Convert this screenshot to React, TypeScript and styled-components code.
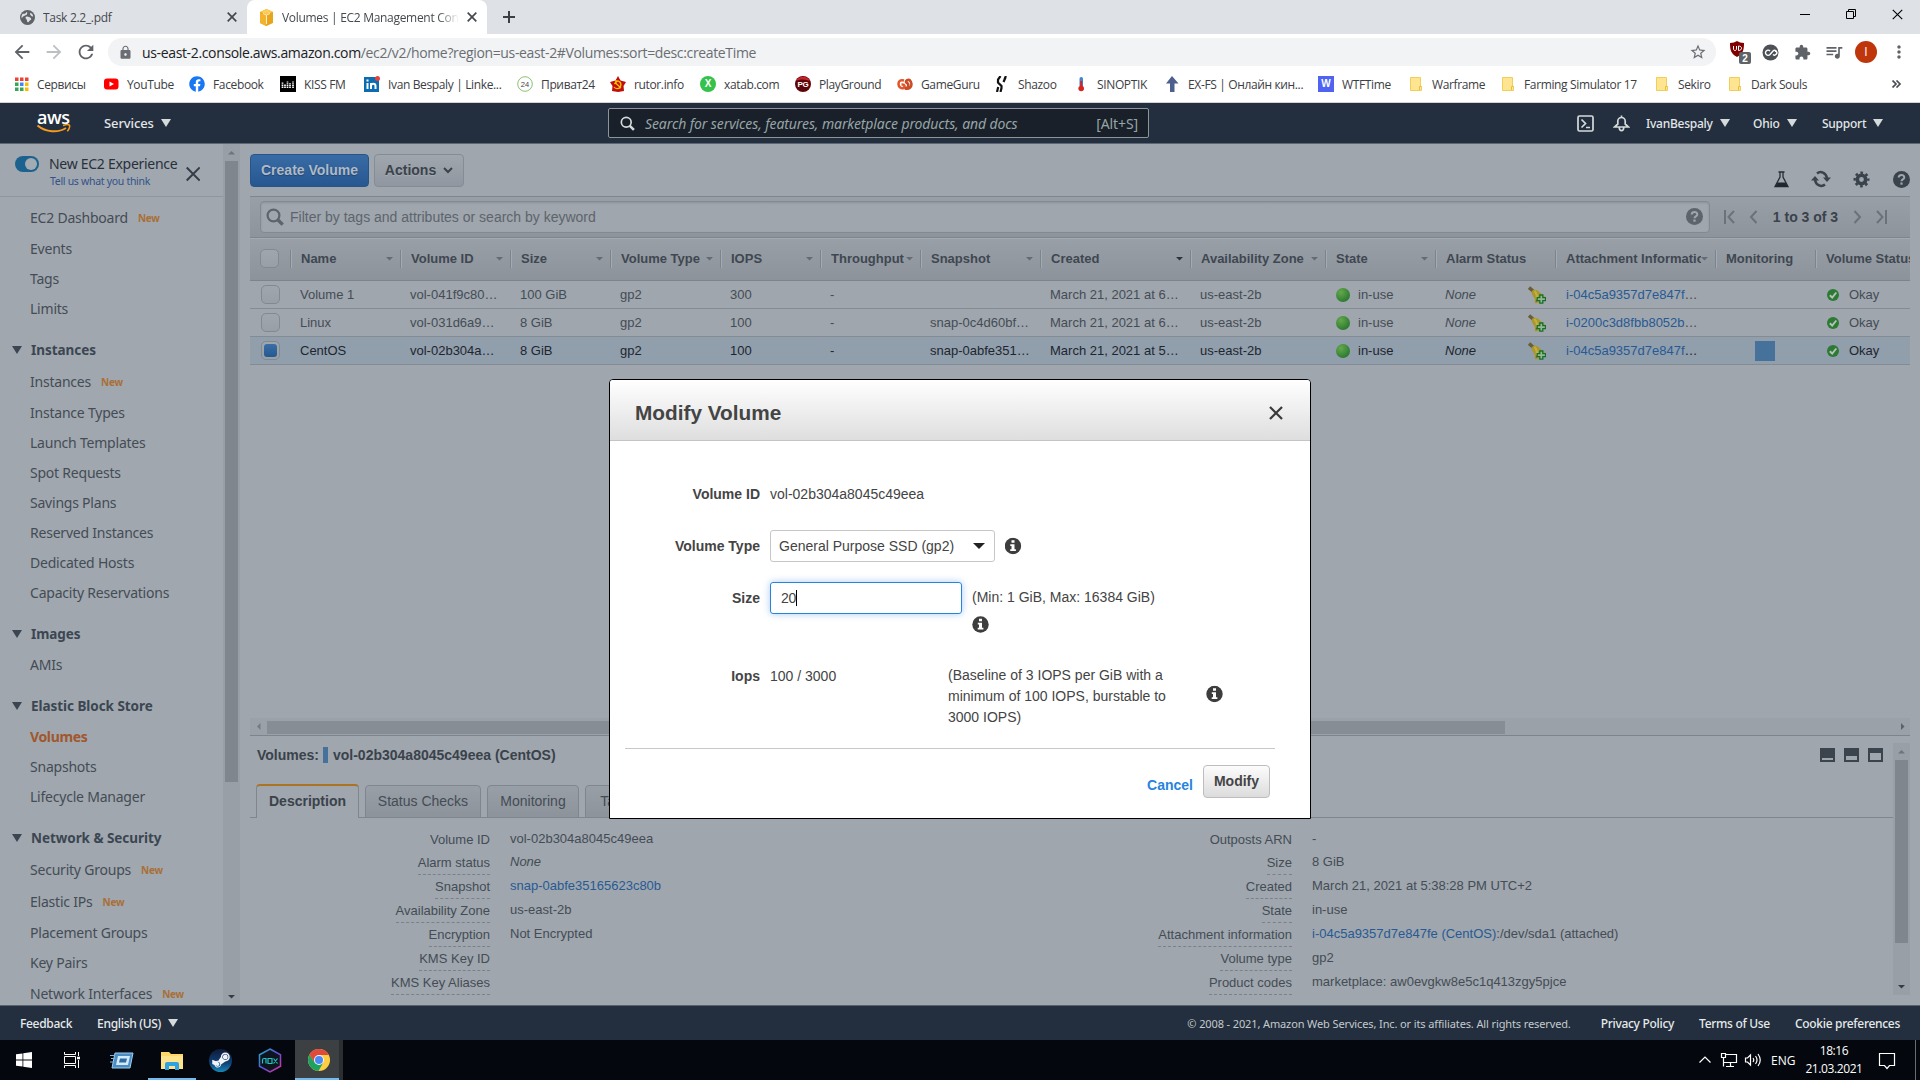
import React from 'react';
import styled, { createGlobalStyle, css } from 'styled-components';
import {
  MdArrowBack,
  MdArrowForward,
  MdRefresh,
  MdLock,
  MdStarBorder,
  MdExtension,
  MdQueueMusic,
  MdMoreVert,
} from 'react-icons/md';
import { FaFacebook, FaSteamSymbol } from 'react-icons/fa';

const arial = `"Liberation Sans", Arial, sans-serif`;
const ui = `"Open Sans", "Noto Sans", sans-serif`;
const ember = `"Noto Sans", "Open Sans", sans-serif`;

const c = {
  page: '#9fa6ad',
  line: '#858c94',
  text: '#444c55',
  strong: '#3a424b',
  link: '#275a94',
  navy: '#232f3e',
};

const GlobalStyle = createGlobalStyle`
  * { box-sizing: border-box; }
  html, body { margin: 0; padding: 0; overflow: hidden; }
  body { width: 1920px; height: 1080px; font-family: ${arial}; }
  svg { display: block; flex: none; }
`;

const Screen = styled.div`
  width: 1920px;
  height: 1080px;
  display: flex;
  flex-direction: column;
  overflow: hidden;
  position: relative;
  background: ${c.page};
`;

const Spacer = styled.div`
  flex: 1;
`;

/* ---------- browser chrome ---------- */

const TabStrip = styled.div`
  height: 34px;
  flex: none;
  display: flex;
  background: #dee1e6;
  font: 12px ${ui};
  color: #45494d;
`;

const BrowserTab = styled.div<{ $active?: boolean; $w: number }>`
  width: ${(p) => p.$w}px;
  height: 34px;
  display: flex;
  align-items: center;
  padding: 0 10px 0 ${(p) => (p.$active ? 12 : 20)}px;
  ${(p) =>
    p.$active &&
    css`
      background: #fff;
      border-radius: 8px 8px 0 0;
    `}
`;

const TabTitle = styled.div<{ $fade?: boolean }>`
  flex: 1;
  margin: 0 8px 0 8px;
  overflow: hidden;
  white-space: nowrap;
  letter-spacing: -0.3px;
  ${(p) =>
    p.$fade &&
    css`
      mask-image: linear-gradient(90deg, #000 88%, transparent);
    `}
`;

const WindowButtons = styled.div`
  display: flex;
  gap: 36px;
  padding: 9px 17px 0 0;
`;

const Toolbar = styled.div`
  height: 42px;
  flex: none;
  display: flex;
  align-items: center;
  padding: 0 0 10px 11px;
  background: #fff;
  color: #5f6368;
`;

const NavIcons = styled.div`
  display: flex;
  flex: none;
  gap: 10px;
  padding-top: 3px;
  width: 97px;
`;

const Omnibox = styled.div`
  width: 1608px;
  flex: none;
  height: 28px;
  margin-top: 4px;
  border-radius: 14px;
  background: #f1f3f4;
  display: flex;
  align-items: center;
  padding: 0 9px 0 10px;
  font: 14px ${ui};
  letter-spacing: -0.35px;
  color: #6a6e73;
`;

const Url = styled.div`
  flex: 1;
  margin-left: 9px;
  white-space: nowrap;
  b {
    font-weight: 400;
    color: #202124;
  }
`;

const Extensions = styled.div`
  display: flex;
  flex: none;
  align-items: center;
  margin: 4px 0 0 9px;
`;

const ExtSlot = styled.div<{ $w: number }>`
  width: ${(p) => p.$w}px;
  display: flex;
  justify-content: center;
`;

const Avatar = styled.div`
  width: 22px;
  height: 22px;
  border-radius: 50%;
  background: #bf360c;
  color: #fff;
  font: 12px/22px ${ui};
  text-align: center;
`;

const Bookmarks = styled.div`
  height: 27px;
  flex: none;
  display: flex;
  align-items: center;
  padding: 0 0 10px 13px;
  background: #fff;
  border-bottom: 1px solid #cfd2d6;
  font: 12px ${ui};
  letter-spacing: -0.36px;
  color: #3c4043;
`;

const Bookmark = styled.div<{ $w: number }>`
  width: ${(p) => p.$w}px;
  flex: none;
  display: flex;
  align-items: center;
  gap: 8px;
  white-space: nowrap;
`;

const Tile = styled.div<{ $bg: string; $round?: boolean }>`
  width: 16px;
  height: 16px;
  flex: none;
  border-radius: ${(p) => (p.$round ? 8 : 0)}px;
  background: ${(p) => p.$bg};
  color: #fff;
  font: bold 10px/16px ${arial};
  text-align: center;
  letter-spacing: 0;
`;

/* ---------- AWS header ---------- */

const AwsBar = styled.div`
  height: 41px;
  flex: none;
  display: flex;
  align-items: center;
  background: ${c.navy};
  border-bottom: 1px solid #5d6771;
  color: #e2e6e8;
  font: 500 13px ${ember};
  letter-spacing: -0.1px;
`;

const AwsLogo = styled.div`
  width: 104px;
  padding: 0 0 3px 36px;
`;

const LogoWord = styled.div`
  font: 600 18px/16px ${ui};
  letter-spacing: -0.4px;
  color: #fff;
  height: 15px;
  margin-left: 1px;
`;

const Caret = styled.span<{ $s?: number; $h?: number; $color?: string }>`
  display: inline-block;
  flex: none;
  width: 0;
  height: 0;
  border: ${(p) => p.$s ?? 5}px solid transparent;
  border-top: ${(p) => p.$h ?? 8}px solid ${(p) => p.$color ?? '#d5dbdb'};
  border-bottom: 0;
`;

const MenuLabel = styled.div<{ $w?: number; $small?: boolean }>`
  display: flex;
  align-items: center;
  gap: 7px;
  white-space: nowrap;
  flex: none;
  width: ${(p) => (p.$w ? p.$w + 'px' : 'auto')};
  ${(p) =>
    p.$small &&
    css`
      font-size: 12px;
      letter-spacing: -0.25px;
    `}
`;

const AwsSearch = styled.div`
  width: 541px;
  flex: none;
  height: 30px;
  display: flex;
  align-items: center;
  padding: 0 10px 0 11px;
  background: #1a2029;
  border: 1px solid #8a9699;
  border-radius: 2px;
  color: #95a5a6;
  font: 14px ${ember};
  letter-spacing: -0.1px;
  i {
    flex: 1;
    margin-left: 10px;
  }
`;

/* ---------- console body ---------- */

const Body = styled.div`
  height: 861px;
  flex: none;
  display: flex;
  background: ${c.page};
`;

const Sidebar = styled.div`
  width: 223px;
  flex: none;
  overflow: hidden;
  background: #a0a7ae;
  font: 14px ${ember};
  color: ${c.text};
`;

const SideHead = styled.div`
  height: 53px;
  border-bottom: 1px solid #8f969e;
  display: flex;
  padding: 12px 0 0 15px;
  margin-bottom: 4px;
`;

const Toggle = styled.div`
  width: 24px;
  height: 16px;
  border-radius: 8px;
  background: #1b628f;
  padding: 2px 2px 0 10px;
  &::after {
    content: '';
    display: block;
    width: 12px;
    height: 12px;
    border-radius: 50%;
    background: #a3abb2;
  }
`;

const SideTitle = styled.div`
  width: 137px;
  margin: -3px 0 0 10px;
  line-height: 21px;
  color: #28313b;
  white-space: nowrap;
  letter-spacing: -0.28px;
  small {
    display: block;
    margin-left: 1px;
    font-size: 10.5px;
    line-height: 14px;
    color: #33528a;
    letter-spacing: -0.3px;
  }
`;

const SideItem = styled.div<{ $new?: boolean; $active?: boolean }>`
  height: ${(p) => (p.$new ? 32 : 30)}px;
  padding-left: 30px;
  display: flex;
  align-items: center;
  white-space: nowrap;
  letter-spacing: -0.22px;
  ${(p) =>
    p.$active &&
    css`
      color: #a0572d;
      font-weight: 700;
      letter-spacing: -0.35px;
    `}
`;

const NewMark = styled.span`
  margin: 2px 0 0 10px;
  font-size: 10px;
  font-weight: 700;
  color: #a96f37;
`;

const SideGroup = styled.div`
  height: 42px;
  padding: 12px 0 0 12px;
  display: flex;
  align-items: center;
  gap: 9px;
  font-weight: 700;
  font-size: 13.5px;
  color: #3b4652;
  white-space: nowrap;
  letter-spacing: -0.05px;
`;

const VScroll = styled.div`
  width: 17px;
  flex: none;
  background: #989fa7;
  display: flex;
  flex-direction: column;
  align-items: center;
  padding: 6px 0;
`;

const VThumb = styled.div<{ $h: number }>`
  width: 13px;
  height: ${(p) => p.$h}px;
  margin-top: 6px;
  background: #7f868e;
`;

const Main = styled.div`
  flex: 1;
  min-width: 0;
  padding: 0 10px;
  display: flex;
  flex-direction: column;
  color: ${c.text};
  font-size: 13px;
`;

const ActionsBar = styled.div`
  height: 52px;
  display: flex;
  align-items: flex-start;
  padding-top: 10px;
  gap: 5px;
`;

const Button = styled.div<{ $primary?: boolean; $w: number }>`
  width: ${(p) => p.$w}px;
  height: 33px;
  display: flex;
  align-items: center;
  justify-content: center;
  gap: 7px;
  padding-bottom: 1px;
  border-radius: 4px;
  font-size: 14px;
  font-weight: 700;
  white-space: nowrap;
  border: 1px solid ${(p) => (p.$primary ? '#285587' : '#858c94')};
  background: ${(p) =>
    p.$primary
      ? 'linear-gradient(#386ba5, #285790)'
      : 'linear-gradient(#9fa6ad, #9097a0)'};
  color: ${(p) => (p.$primary ? '#b0bac4' : c.strong)};
  text-shadow: ${(p) => (p.$primary ? '0 1px 1px #1f4575' : '0 1px 0 #a5acb3')};
`;

const ActionIcons = styled.div`
  margin: 0 -11px 0 auto;
  display: grid;
  grid-template-columns: repeat(4, 40px);
  justify-items: center;
  align-items: center;
  padding-top: 16px;
  color: ${c.strong};
`;

const FilterBar = styled.div`
  height: 42px;
  border-top: 1px solid #7f868e;
  border-bottom: 1px solid #7f868e;
  background: linear-gradient(#989fa7, #8d949c);
  display: flex;
  align-items: center;
  padding: 0 23px 1px 10px;
`;

const FilterInput = styled.div`
  width: 1450px;
  height: 32px;
  border: 1px solid #838a92;
  border-radius: 4px;
  background: #9fa6ad;
  box-shadow: inset 0 1px 2px #8b9299;
  display: flex;
  align-items: center;
  padding: 0 6px 0 5px;
  color: #5d646c;
  font-size: 14px;
  span {
    flex: 1;
    margin-left: 6px;
  }
`;

const Pager = styled.div`
  flex: 1;
  margin-left: 14px;
  display: flex;
  align-items: center;
  justify-content: space-between;
  font-size: 14px;
  color: ${c.strong};
`;

const columns =
  '40px 110px 110px 100px 110px 100px 100px 120px 150px 135px 110px 120px 160px 100px 95px';

const HeadRow = styled.div`
  height: 43px;
  display: grid;
  grid-template-columns: ${columns};
  align-items: center;
  padding-bottom: 2px;
  background: linear-gradient(#989fa7, #8c939b);
  border-top: 1px solid #a3aab1;
  border-bottom: 1px solid #7d848c;
`;

const HeadCell = styled.div<{ $sortable: boolean }>`
  height: 18px;
  border-left: 1px solid #7d848c;
  box-shadow: inset 1px 0 0 #a3aab1;
  padding: 0 ${(p) => (p.$sortable ? 7 : 0)}px 0 10px;
  display: flex;
  align-items: center;
  font-weight: 700;
  color: #3f4750;
  white-space: nowrap;
  overflow: hidden;
  span {
    flex: 1;
    overflow: hidden;
  }
`;

const Row = styled.div<{ $selected?: boolean }>`
  height: 28px;
  display: grid;
  grid-template-columns: ${columns};
  align-items: center;
  border-bottom: 1px solid #848b93;
  ${(p) =>
    p.$selected &&
    css`
      background: #919eac;
      color: #1d262f;
    `}
`;

const Cell = styled.div<{ $pad?: number }>`
  padding-left: ${(p) => p.$pad ?? 10}px;
  display: flex;
  align-items: center;
  white-space: nowrap;
  a {
    color: ${c.link};
  }
`;

const Check = styled.div<{ $on?: boolean; $head?: boolean }>`
  width: 19px;
  height: 19px;
  margin-left: ${(p) => (p.$head ? 10 : 11)}px;
  border: 1px solid #828990;
  border-radius: 5px;
  background: linear-gradient(#9fa6ad, #989fa7);
  padding: 2px;
  &::after {
    content: '';
    display: ${(p) => (p.$on ? 'block' : 'none')};
    height: 13px;
    border-radius: 3px;
    background: linear-gradient(#3a6ea8, #26578f);
  }
`;

const StateDot = styled.div`
  width: 14px;
  height: 14px;
  margin-right: 8px;
  border-radius: 50%;
  background: radial-gradient(circle at 35% 30%, #65a84b, #338035 65%, #246b2d);
`;

const BlueSquare = styled.div`
  width: 20px;
  height: 20px;
  margin-left: 30px;
  background: #46719a;
`;

const EmptyArea = styled.div`
  height: 353px;
`;

const HScroll = styled.div`
  height: 18px;
  border-bottom: 1px solid #7d848c;
  background: #9aa1a8;
  display: flex;
  align-items: center;
  padding: 0 5px 0 6px;
  justify-content: space-between;
`;

const HThumb = styled.div`
  width: 1238px;
  height: 13px;
  margin: 1px auto 0 6px;
  background: #868d95;
`;

const Detail = styled.div`
  flex: 1;
  display: flex;
  padding: 7px 0 10px;
  min-height: 0;
`;

const DetailMain = styled.div`
  flex: 1;
  min-width: 0;
`;

const DetailTitle = styled.div`
  height: 41px;
  display: flex;
  align-items: flex-start;
  padding: 4px 10px 0 7px;
  font-size: 14px;
  font-weight: 700;
  color: ${c.strong};
  i {
    width: 5px;
    height: 16px;
    margin: 0 5px 0 4px;
    background: #46719a;
  }
`;

const PaneIcons = styled.div`
  margin-left: auto;
  display: flex;
  gap: 9px;
  padding-top: 1px;
`;

const PaneIcon = styled.div<{ $top: number }>`
  width: 15px;
  height: 14px;
  border: 2px solid #3b434c;
  border-top-width: ${(p) => p.$top}px;
`;

const Tabs = styled.div`
  height: 34px;
  display: flex;
  align-items: flex-end;
  gap: 6px;
  padding-left: 6px;
  box-shadow: inset 0 -1px 0 #7f868e;
`;

const DetailTab = styled.div<{ $active?: boolean; $w: number }>`
  width: ${(p) => p.$w}px;
  height: ${(p) => (p.$active ? 34 : 33)}px;
  border: 1px solid #7f868e;
  border-radius: 4px 4px 0 0;
  background: linear-gradient(#999fa7, #8c939b);
  font-size: 14px;
  line-height: 31px;
  text-align: center;
  ${(p) =>
    p.$active &&
    css`
      background: ${c.page};
      border-top: 2px solid #ab7423;
      border-bottom: 0;
      font-weight: 700;
      color: ${c.strong};
    `}
`;

const DetailColumns = styled.div`
  display: grid;
  grid-template-columns: 802px 1fr;
  padding-top: 11px;
`;

const Props = styled.dl`
  margin: 0;
  display: grid;
  grid-template-columns: 240px 1fr;
  grid-template-rows: 23px;
  grid-auto-rows: 24px;
  column-gap: 20px;
  white-space: nowrap;
`;

const Term = styled.dt<{ $plain?: boolean }>`
  justify-self: end;
  height: 23px;
  line-height: 22px;
  border-bottom: ${(p) => (p.$plain ? '0' : '1px dashed #7a8189')};
`;

const Value = styled.dd`
  margin: 0;
  line-height: 20px;
  a {
    color: ${c.link};
  }
`;

const Footer = styled.div`
  height: 35px;
  flex: none;
  display: flex;
  align-items: center;
  padding: 0 20px 0;
  border-top: 1px solid #59636e;
  background: ${c.navy};
  font: 500 12px ${ember};
  letter-spacing: -0.3px;
  color: #e6eaeb;
  white-space: nowrap;
`;

const Copyright = styled.span`
  font-size: 11px;
  font-weight: 400;
  color: #c3cacd;
  letter-spacing: -0.12px;
  margin-right: 30px;
`;

const FooterLink = styled.span<{ $gap: number }>`
  margin-right: ${(p) => p.$gap}px;
`;

/* ---------- modal ---------- */

const Modal = styled.div`
  position: absolute;
  left: 609px;
  top: 379px;
  width: 702px;
  height: 440px;
  border: 1px solid #000;
  border-radius: 4px 4px 0 0;
  background: #fff;
  color: #444;
  font-size: 14px;
  overflow: hidden;
`;

const ModalHead = styled.div`
  height: 61px;
  border-bottom: 1px solid #c4c4c4;
  background: linear-gradient(#fff, #dedede);
  display: flex;
  align-items: center;
  justify-content: space-between;
  padding: 6px 27px 0 25px;
  font-size: 20.8px;
  font-weight: 700;
`;

const Field = styled.div<{ $h: number; $pt: number }>`
  height: ${(p) => p.$h}px;
  padding-top: ${(p) => p.$pt}px;
  display: flex;
  line-height: 21px;
`;

const FieldLabel = styled.div<{ $drop?: number }>`
  width: 150px;
  margin: ${(p) => p.$drop ?? 0}px 10px 0 0;
  text-align: right;
  font-weight: 700;
`;

const Select = styled.div`
  width: 225px;
  height: 32px;
  margin-right: 10px;
  border: 1px solid #c6c6c6;
  border-radius: 3px;
  display: flex;
  align-items: center;
  justify-content: space-between;
  padding: 0 9px 0 8px;
`;

const SizeInput = styled.div`
  width: 192px;
  height: 32px;
  margin-right: 10px;
  border: 1px solid #2784dd;
  border-radius: 3px;
  box-shadow: 0 0 7px rgba(60, 140, 225, 0.45);
  display: flex;
  align-items: center;
  padding-left: 10px;
  letter-spacing: -0.3px;
  &::after {
    content: '';
    width: 1px;
    height: 16px;
    background: #000;
  }
`;

const SizeHint = styled.div`
  padding-top: 5px;
  svg {
    margin-top: 8px;
  }
`;

const Iops = styled.div`
  width: 178px;
  padding-top: 1px;
`;

const IopsHint = styled.div`
  width: 258px;
`;

const ModalFoot = styled.div`
  margin: 0 35px 0 15px;
  border-top: 1px solid #c8c8c8;
  display: flex;
  justify-content: flex-end;
  padding: 16px 5px 0 0;
  font-weight: 700;
`;

const Cancel = styled.div`
  margin: 12px 10px 0 0;
  color: #2784dd;
`;

const ModifyButton = styled.div`
  width: 67px;
  height: 33px;
  border: 1px solid #bdbdbd;
  border-radius: 4px;
  background: linear-gradient(#fcfcfc, #dcdcdc);
  text-align: center;
  line-height: 30px;
`;

/* ---------- taskbar ---------- */

const Taskbar = styled.div`
  height: 40px;
  flex: none;
  display: flex;
  align-items: center;
  background: #04080e;
  color: #fff;
  font: 12px ${ui};
`;

const TaskSlot = styled.div<{ $w: number; $open?: boolean; $active?: boolean }>`
  width: ${(p) => p.$w}px;
  height: 40px;
  display: flex;
  align-items: center;
  justify-content: center;
  background: ${(p) => (p.$active ? '#3c4043' : 'transparent')};
  border-right: ${(p) => (p.$active ? '4px solid #2b2f32' : '0')};
  padding-left: ${(p) => (p.$active ? 4 : 0)}px;
  box-shadow: ${(p) => (p.$open || p.$active ? 'inset 0 -2px 0 #76b9ed' : 'none')};
`;

const SteamDisc = styled.div`
  width: 23px;
  height: 23px;
  border-radius: 50%;
  display: flex;
  align-items: center;
  justify-content: center;
  background: linear-gradient(#101a3a, #0f3f73 60%, #1587b8);
`;

const Tray = styled.div`
  margin-left: auto;
  display: flex;
  align-items: center;
`;

const Clock = styled.div`
  width: 80px;
  text-align: center;
  line-height: 18px;
  letter-spacing: -0.4px;
`;

/* ---------- drawings ---------- */

const Cross = ({ s, w, color }: { s: number; w: number; color: string }) => (
  <svg width={s} height={s} viewBox="0 0 10 10" stroke={color} strokeWidth={(w * 10) / s}>
    <path d="M.7.7 9.3 9.3M9.3.7.7 9.3" />
  </svg>
);

const Globe = () => (
  <svg width="15" height="15" viewBox="0 0 16 16">
    <circle cx="8" cy="8" r="8" fill="#5f6368" />
    <path d="M3 4c2 .5 3-.5 4-2 1 0 1 2 0 3S3 6 2 9C1 7 2 5 3 4zM7 7c2 0 5 1 5 3-1 1-2 1-3 3-2 0-1-2-2-3S5 8 7 7zM11 3c2 1 3 2 3 4-2 0-4-2-3-4z" fill="#dee1e6" />
  </svg>
);

const Cube = () => (
  <svg width="15" height="17" viewBox="0 0 15 17">
    <path d="M1 3 7.500 0 14 3v11l-6.500 3L1 14z" fill="#e8a41c" />
    <path d="M1 3 7.500 0 14 3 7.500 5z" fill="#fdcd55" />
    <path d="M1 4l6 2v11l-6-3z" fill="#f4b32f" />
    <path d="M4 4.500l3.500 1.500L11 4.500M7.500 6v9" stroke="#fff0c4" fill="none" />
  </svg>
);

const AppsGrid = () => (
  <svg width="16" height="16" viewBox="0 0 16 16">
    {['#ea4335', '#ea4335', '#ea4335', '#34a853', '#4285f4', '#fbbc04', '#34a853', '#34a853', '#fbbc04'].map((f, i) => (
      <rect key={i} x={2 + (i % 3) * 5} y={1.500 + Math.floor(i / 3) * 5} width="3.500" height="3.500" fill={f} />
    ))}
  </svg>
);

const YouTube = () => (
  <svg width="16" height="16" viewBox="0 0 16 16">
    <rect x="1" y="2.500" width="14.500" height="11" rx="3" fill="#f00" />
    <path d="M6.500 5.500v5l4.500-2.500z" fill="#fff" />
  </svg>
);

const KissBars = () => (
  <svg width="16" height="16" viewBox="0 0 16 16">
    <rect width="16" height="16" fill="#000" />
    <path d="M2.500 12V6M5 12V8M7.500 12V5M10 12V7M13 12V5" stroke="#fff" strokeWidth="1.700" strokeDasharray="1.200 .6" />
  </svg>
);

const LinkedIn = () => (
  <svg width="16" height="16" viewBox="0 0 16 16">
    <rect y="1" width="15" height="15" fill="#0b6cb0" />
    <path d="M3.500 7v6M7 13V7M7 10c0-3 4.500-3 4.500 0v3" stroke="#fff" strokeWidth="2" fill="none" />
    <rect x="2.500" y="3.500" width="2" height="2" fill="#fff" />
    <circle cx="13.500" cy="2.500" r="2.500" fill="#e8413c" />
  </svg>
);

const Privat = () => (
  <svg width="16" height="16" viewBox="0 0 16 16">
    <circle cx="8" cy="8" r="7.300" fill="#fff" stroke="#8cc06c" />
    <text x="8" y="10.800" fontSize="7.500" textAnchor="middle" fill="#444" fontFamily="Liberation Sans" letterSpacing="0">24</text>
  </svg>
);

const Rutor = () => (
  <svg width="16" height="16" viewBox="0 0 16 16">
    <path d="M8 0l2.500 4.500L16 6l-2.500 4 .5 5-6 1-6-1 .5-5L0 6l5.500-1.500z" fill="#c00d0d" />
    <path d="M5 5c4-1 7 2 5.500 5.500S5 12.500 4 11M5 6.500l6 5.500M4.500 8l2.500-3" stroke="#ffc400" strokeWidth="1.300" fill="none" />
  </svg>
);

const PlayGround = () => (
  <svg width="16" height="16" viewBox="0 0 16 16">
    <circle cx="8" cy="8" r="8" fill="#5c0509" />
    <path d="M1 5a8 8 0 0 1 14 0C10 3 5 3 1 5z" fill="#c3232a" />
    <text x="8" y="11" fontSize="8" textAnchor="middle" fill="#fff" fontFamily="Liberation Sans" fontWeight="bold">PG</text>
  </svg>
);

const GameGuru = () => (
  <svg width="16" height="16" viewBox="0 0 16 16" fill="none" strokeWidth="2.600">
    <path d="M7 4.500C3.500 3.500 1.500 5 1.500 8s3 5 5 4c2-1 1-3.500-1-3.500H4.500" stroke="#e2562a" />
    <path d="M12.500 4C9 3.500 8 6 10 7s2 5-2 5.500c4 1 6.500-1 6.500-4.500 0-2-1-3-2-4z" stroke="#c94c26" />
  </svg>
);

const Shazoo = () => (
  <svg width="16" height="16" viewBox="0 0 16 16" fill="none" stroke="#111" strokeWidth="2.200">
    <path d="M6.500 0 4 3.500v3L7.500 10v2l-1 4M12 0l-1.500 3M11.500 1.500 9.500 6M3 16l1.200-5" />
  </svg>
);

const Thermo = () => (
  <svg width="16" height="16" viewBox="0 0 16 16">
    <rect x="6.500" y="1" width="3.500" height="10" rx="1.700" fill="#3f86cf" />
    <path d="M8.200 5v7" stroke="#d3261f" strokeWidth="2" />
    <circle cx="8.200" cy="12.500" r="2.800" fill="#d3261f" />
  </svg>
);

const UpArrow = () => (
  <svg width="16" height="16" viewBox="0 0 16 16">
    <path d="M8 0 14.500 7.500h-4V16H6V7.500H2z" fill="#4d5f8d" />
  </svg>
);

const Folder = () => (
  <svg width="16" height="16" viewBox="0 0 16 16">
    <path d="M2.500 1.500h10v9h1v4h-11z" fill="#ffe591" stroke="#efcf58" />
    <path d="M11.500 14v-3.500h2" fill="none" stroke="#e8bf3b" />
  </svg>
);

const bookmarks: [string, React.ReactNode, number][] = [
  ['Сервисы', <AppsGrid />, 90],
  ['YouTube', <YouTube />, 86],
  ['Facebook', <FaFacebook size={16} color="#1877f2" />, 91],
  ['KISS FM', <KissBars />, 84],
  ['Ivan Bespaly | Linke...', <LinkedIn />, 153],
  ['Приват24', <Privat />, 93],
  ['rutor.info', <Rutor />, 90],
  ['xatab.com', <Tile $bg="#35c24a" $round>X</Tile>, 95],
  ['PlayGround', <PlayGround />, 102],
  ['GameGuru', <GameGuru />, 97],
  ['Shazoo', <Shazoo />, 79],
  ['SINOPTIK', <Thermo />, 91],
  ['EX-FS | Онлайн кин...', <UpArrow />, 154],
  ['WTFTime', <Tile $bg="#4f63f0">W</Tile>, 90],
  ['Warframe', <Folder />, 92],
  ['Farming Simulator 17', <Folder />, 154],
  ['Sekiro', <Folder />, 73],
  ['Dark Souls', <Folder />, 120],
];

const UBlock = () => (
  <svg width="22" height="24" viewBox="0 0 22 24">
    <path d="M1 3c3 0 5-1 7-2 2 1 4 2 7 2 0 7-1 11-7 14C2 14 1 10 1 3z" fill="#800000" />
    <path d="M4.500 6v3c0 2 3 2 3 0V6M9.500 6v4.500c4 0 4-4.500 0-4.500z" stroke="#fff" fill="none" />
    <rect x="10" y="12" width="12" height="12" rx="2" fill="#5f6368" />
    <text x="16" y="21.500" fontSize="10" textAnchor="middle" fill="#fff" fontFamily="Liberation Sans" fontWeight="bold">2</text>
  </svg>
);

const LinkExt = () => (
  <svg width="17" height="17" viewBox="0 0 17 17" fill="none" stroke="#fff" strokeWidth="1.400">
    <circle cx="8.500" cy="8.500" r="8" fill="#4d5156" stroke="none" />
    <path d="M8 7a2.600 2.600 0 1 0 0 3.500L11 7a2.300 2.300 0 1 1 0 3.500M13 7.200h2" />
  </svg>
);

const CloudShell = () => (
  <svg width="17" height="17" viewBox="0 0 17 17" fill="none" stroke="#d5dbdb" strokeWidth="1.700">
    <rect x="1" y="1" width="15" height="15" rx="1.500" />
    <path d="M4.500 4.500 8.500 8.500l-4 4M9 12.500h4" />
  </svg>
);

const Bell = () => (
  <svg width="17" height="17" viewBox="0 0 17 17" fill="none" stroke="#d5dbdb" strokeWidth="1.700">
    <path d="M8.500 .5v2M1.500 12h14L12.200 9V6c0-2-1.700-3.500-3.700-3.500S4.800 4 4.800 6v3zM6.200 12.500c.3 4.200 4.300 4.200 4.600 0" />
  </svg>
);

const Magnifier = ({ s, color, w }: { s: number; color: string; w: number }) => (
  <svg width={s} height={s} viewBox="0 0 18 18" fill="none" stroke={color}>
    <circle cx="7.500" cy="7.500" r="5.900" strokeWidth={w} />
    <path d="M11.500 11.500 16.700 16.700" strokeWidth={w * 1.500} />
  </svg>
);

const Flask = () => (
  <svg width="17" height="17" viewBox="0 0 17 17">
    <path d="M5.500 1h6M7 1v5L2 15.500h13L10 6V1" fill="none" stroke="#252d36" strokeWidth="1.300" />
    <path d="M4.500 11.500h8l2.500 4.500H2z" fill="#1f2830" />
  </svg>
);

const Sync = () => (
  <svg width="20" height="18" viewBox="0 0 20 18" fill="none" stroke="#3a424b" strokeWidth="2.500">
    <path d="M6 3.500c3.500-3 9-1 10 4.500M14 14.500c-3.500 3-9 1-10-4.500" />
    <path d="M12 7.500h8l-4 4.500zM0 10.500h8L4 6z" fill="#3a424b" stroke="none" />
  </svg>
);

const Gear = () => (
  <svg width="17" height="17" viewBox="0 0 17 17">
    <circle cx="8.500" cy="8.500" r="4.200" fill="none" stroke="#3a424b" strokeWidth="3.600" />
    <circle cx="8.500" cy="8.500" r="6.800" fill="none" stroke="#3a424b" strokeWidth="2.400" strokeDasharray="2.670 2.670" strokeDashoffset="1.330" />
  </svg>
);

const Help = ({ s, color, bg }: { s: number; color: string; bg: string }) => (
  <svg width={s} height={s} viewBox="0 0 17 17">
    <circle cx="8.500" cy="8.500" r="8.500" fill={color} />
    <path d="M5.700 6.600c0-3.600 5.600-3.400 5.600-.2 0 2-2.800 2-2.800 3.800" fill="none" stroke={bg} strokeWidth="2" />
    <rect x="7.400" y="11.500" width="2.200" height="2.200" fill={bg} />
  </svg>
);

const Info = () => (
  <svg width="17" height="17" viewBox="0 0 17 17">
    <circle cx="8.500" cy="8.500" r="8.200" fill="#3d3d3d" />
    <path d="M7 2.700h3v2.600H7zM5.800 6.700H10v5h1.400v1.800H5.700v-1.800H7V8.400H5.800z" fill="#fff" />
  </svg>
);

const BellPlus = () => (
  <svg width="18" height="18" viewBox="0 0 18 18">
    <path d="M1 1.500 5 5" stroke="#6b5d38" strokeWidth="3.400" />
    <path d="M4 5C6 2.500 10 4 12 6.500S16 9 17 11c.5 2-6 6.500-9 6.500-2 0-.5-2.500-1.500-5S2.500 8 4 5z" fill="#ab982c" />
    <path d="M6.500 5c2 2 3 5 2.500 10" stroke="#c2b040" strokeWidth="2" fill="none" />
    <path d="M8 15.500q1-2.500 4-3" stroke="#6b5d38" strokeWidth="1.500" fill="none" />
    <path d="M11.800 9h3v2.600h2.700v3h-2.700v2.600h-3v-2.600H9.200v-3h2.600z" fill="#93b795" stroke="#16702a" strokeWidth="1.300" />
  </svg>
);

const OkBadge = () => (
  <svg width="12" height="12" viewBox="0 0 12 12">
    <circle cx="6" cy="6" r="6" fill="#2d7a34" />
    <path d="M2.800 6.200 5.200 8.500 9.300 3.500" fill="none" stroke="#b4c2b8" strokeWidth="1.900" />
  </svg>
);

const Chevron = ({ flip, bar }: { flip?: boolean; bar?: boolean }) => (
  <svg width="11" height="14" viewBox="0 0 11 14" fill="none" stroke="#6b727a" strokeWidth="2" transform={flip ? 'scale(-1 1)' : undefined}>
    <path d={bar ? 'M1 0v14M10 1 4.500 7 10 13' : 'M8.500 1 3 7l5.500 6'} />
  </svg>
);

const Tri = ({ dir, color }: { dir: 'u' | 'd' | 'l' | 'r'; color: string }) => {
  const d = { u: 'M0 4.500h7L3.500 1z', d: 'M0 1h7L3.500 4.500z', l: 'M4.500 0v7L1 3.500z', r: 'M1 0v7l3.500-3.500z' }[dir];
  const tall = dir === 'l' || dir === 'r';
  return (
    <svg width={tall ? 5 : 7} height={tall ? 7 : 5}>
      <path d={d} fill={color} />
    </svg>
  );
};

const Smile = () => (
  <svg width="35" height="10" viewBox="0 0 35 10">
    <path d="M1.500 1.500C10 8.500 22 9 30 4" stroke="#f79b1d" strokeWidth="2" fill="none" />
    <path d="M27 1.500c3-1 6-1 6.500-.2.600 1.200-.6 4.500-2.300 6" stroke="#f79b1d" strokeWidth="1.500" fill="none" />
  </svg>
);

/* ---------- data ---------- */

type SideEntry = { group?: string; item?: string; isNew?: boolean; active?: boolean };
const side: SideEntry[] = [
  { item: 'EC2 Dashboard', isNew: true },
  { item: 'Events' },
  { item: 'Tags' },
  { item: 'Limits' },
  { group: 'Instances' },
  { item: 'Instances', isNew: true },
  { item: 'Instance Types' },
  { item: 'Launch Templates' },
  { item: 'Spot Requests' },
  { item: 'Savings Plans' },
  { item: 'Reserved Instances' },
  { item: 'Dedicated Hosts' },
  { item: 'Capacity Reservations' },
  { group: 'Images' },
  { item: 'AMIs' },
  { group: 'Elastic Block Store' },
  { item: 'Volumes', active: true },
  { item: 'Snapshots' },
  { item: 'Lifecycle Manager' },
  { group: 'Network & Security' },
  { item: 'Security Groups', isNew: true },
  { item: 'Elastic IPs', isNew: true },
  { item: 'Placement Groups' },
  { item: 'Key Pairs' },
  { item: 'Network Interfaces', isNew: true },
];

const heads: [string, boolean][] = [
  ['Name', true],
  ['Volume ID', true],
  ['Size', true],
  ['Volume Type', true],
  ['IOPS', true],
  ['Throughput', true],
  ['Snapshot', true],
  ['Created', true],
  ['Availability Zone', true],
  ['State', true],
  ['Alarm Status', false],
  ['Attachment Information', true],
  ['Monitoring', false],
  ['Volume Status', false],
];

const volumes = [
  { name: 'Volume 1', id: 'vol-041f9c80…', size: '100 GiB', iops: '300', snap: '', created: 'March 21, 2021 at 6…', att: 'i-04c5a9357d7e847f' },
  { name: 'Linux', id: 'vol-031d6a9…', size: '8 GiB', iops: '100', snap: 'snap-0c4d60bf…', created: 'March 21, 2021 at 6…', att: 'i-0200c3d8fbb8052b' },
  { name: 'CentOS', id: 'vol-02b304a…', size: '8 GiB', iops: '100', snap: 'snap-0abfe351…', created: 'March 21, 2021 at 5…', att: 'i-04c5a9357d7e847f', selected: true },
];

const leftProps: [string, React.ReactNode][] = [
  ['Volume ID', 'vol-02b304a8045c49eea'],
  ['Alarm status', <em>None</em>],
  ['Snapshot', <a>snap-0abfe35165623c80b</a>],
  ['Availability Zone', 'us-east-2b'],
  ['Encryption', 'Not Encrypted'],
  ['KMS Key ID', ''],
  ['KMS Key Aliases', ''],
];

const rightProps: [string, React.ReactNode][] = [
  ['Outposts ARN', '-'],
  ['Size', '8 GiB'],
  ['Created', 'March 21, 2021 at 5:38:28 PM UTC+2'],
  ['State', 'in-use'],
  ['Attachment information', <><a>i-04c5a9357d7e847fe (CentOS)</a>:/dev/sda1 (attached)</>],
  ['Volume type', 'gp2'],
  ['Product codes', 'marketplace: aw0evgkw8e5c1q413zgy5pjce'],
];

const PropList = ({ items }: { items: [string, React.ReactNode][] }) => (
  <Props>
    {items.map(([k, v], i) => (
      <React.Fragment key={k}>
        <Term $plain={i === 0}>{k}</Term>
        <Value>{v}</Value>
      </React.Fragment>
    ))}
  </Props>
);

const VerticalScrollbar = ({ thumb }: { thumb: number }) => (
  <VScroll>
    <Tri dir="u" color="#6e757d" />
    <VThumb $h={thumb} />
    <Spacer />
    <Tri dir="d" color="#343c45" />
  </VScroll>
);

const Browser = () => (
  <>
    <TabStrip>
      <BrowserTab $w={247}>
        <Globe />
        <TabTitle>Task 2.2_.pdf</TabTitle>
        <Cross s={10} w={1.7} color="#45494d" />
      </BrowserTab>
      <BrowserTab $w={240} $active>
        <Cube />
        <TabTitle $fade>Volumes | EC2 Management Console</TabTitle>
        <Cross s={10} w={1.7} color="#45494d" />
      </BrowserTab>
      <svg width="42" height="34" stroke="#3c4043" strokeWidth="2">
        <path d="M22 11v12M16 17h12" />
      </svg>
      <Spacer />
      <WindowButtons>
        <svg width="10" height="11"><path d="M0 5.500h10" stroke="#000" /></svg>
        <svg width="10" height="11" fill="none" stroke="#000">
          <path d="M.5 2.500h7v7h-7zM2.500 2V.5h7v7H8" />
        </svg>
        <Cross s={11} w={1.1} color="#000" />
      </WindowButtons>
    </TabStrip>
    <Toolbar>
      <NavIcons>
        <MdArrowBack size={22} />
        <MdArrowForward size={22} color="#bcbfc3" />
        <MdRefresh size={22} />
      </NavIcons>
      <Omnibox>
        <MdLock size={15} />
        <Url>
          <b>us-east-2.console.aws.amazon.com</b>/ec2/v2/home?region=us-east-2#Volumes:sort=desc:createTime
        </Url>
        <MdStarBorder size={18} />
      </Omnibox>
      <Extensions>
        <ExtSlot $w={30}><UBlock /></ExtSlot>
        <ExtSlot $w={30}><LinkExt /></ExtSlot>
        <ExtSlot $w={34}><MdExtension size={17} /></ExtSlot>
        <ExtSlot $w={30}><MdQueueMusic size={20} /></ExtSlot>
        <ExtSlot $w={34}><Avatar>I</Avatar></ExtSlot>
        <ExtSlot $w={32}><MdMoreVert size={20} /></ExtSlot>
      </Extensions>
    </Toolbar>
    <Bookmarks>
      {bookmarks.map(([label, icon, w]) => (
        <Bookmark key={label} $w={w}>
          {icon}
          {label}
        </Bookmark>
      ))}
      <Spacer />
      <svg width="28" height="8" fill="none" stroke="#4a4e52" strokeWidth="1.700">
        <path d="M.5.500 4 4 .5 7.500M4.500.500 8 4 4.500 7.500" />
      </svg>
    </Bookmarks>
  </>
);

const AwsHeader = () => (
  <AwsBar>
    <AwsLogo>
      <LogoWord>aws</LogoWord>
      <Smile />
    </AwsLogo>
    <MenuLabel $w={504}>
      Services <Caret />
    </MenuLabel>
    <AwsSearch>
      <Magnifier s={15} color="#d5dbdb" w={2} />
      <i>Search for services, features, marketplace products, and docs</i>
      <span>[Alt+S]</span>
    </AwsSearch>
    <Spacer />
    <MenuLabel $w={36}><CloudShell /></MenuLabel>
    <MenuLabel $w={33}><Bell /></MenuLabel>
    <MenuLabel $w={107} $small>IvanBespaly <Caret /></MenuLabel>
    <MenuLabel $w={69} $small>Ohio <Caret /></MenuLabel>
    <MenuLabel $w={98} $small>Support <Caret /></MenuLabel>
  </AwsBar>
);

const SideNav = () => (
  <Sidebar>
    <SideHead>
      <Toggle />
      <SideTitle>
        New EC2 Experience
        <small>Tell us what you think</small>
      </SideTitle>
      <svg width="14" height="38" stroke="#343d47" strokeWidth="2">
        <path d="M.7 11.500l13 13M13.700 11.500l-13 13" />
      </svg>
    </SideHead>
    {side.map((e, i) =>
      e.group ? (
        <SideGroup key={i}>
          <Caret $color="#3b4652" />
          {e.group}
        </SideGroup>
      ) : (
        <SideItem key={i} $new={e.isNew} $active={e.active}>
          {e.item}
          {e.isNew && <NewMark>New</NewMark>}
        </SideItem>
      ),
    )}
  </Sidebar>
);

const VolumeTable = () => (
  <>
    <HeadRow>
      <Check $head />
      {heads.map(([h, arrow]) => (
        <HeadCell key={h} $sortable={arrow}>
          <span>{h}</span>
          {arrow && <Tri dir="d" color={h === 'Created' ? '#2c343c' : '#646b73'} />}
        </HeadCell>
      ))}
    </HeadRow>
    {volumes.map((v) => (
      <Row key={v.name} $selected={v.selected}>
        <Check $on={v.selected} />
        <Cell>{v.name}</Cell>
        <Cell>{v.id}</Cell>
        <Cell>{v.size}</Cell>
        <Cell>gp2</Cell>
        <Cell>{v.iops}</Cell>
        <Cell>-</Cell>
        <Cell>{v.snap}</Cell>
        <Cell>{v.created}</Cell>
        <Cell>us-east-2b</Cell>
        <Cell $pad={11}>
          <StateDot />
          in-use
        </Cell>
        <Cell>
          <em>None</em>
          <Spacer />
          <MenuLabel $w={27}><BellPlus /></MenuLabel>
        </Cell>
        <Cell $pad={11}>
          <a>{v.att}</a>…
        </Cell>
        <Cell>{v.selected && <BlueSquare />}</Cell>
        <Cell $pad={12}>
          <MenuLabel $w={22}><OkBadge /></MenuLabel>
          Okay
        </Cell>
      </Row>
    ))}
  </>
);

const ModifyDialog = () => (
  <Modal>
    <ModalHead>
      Modify Volume
      <Cross s={14} w={2.2} color="#3a3a3a" />
    </ModalHead>
    <Field $h={89} $pt={43}>
      <FieldLabel>Volume ID</FieldLabel>
      vol-02b304a8045c49eea
    </Field>
    <Field $h={52} $pt={0}>
      <FieldLabel $drop={6}>Volume Type</FieldLabel>
      <Select>
        General Purpose SSD (gp2)
        <Caret $s={6} $h={6.5} $color="#222" />
      </Select>
      <svg width="17" height="32"><g transform="translate(-.5 7.500)"><Info /></g></svg>
    </Field>
    <Field $h={83} $pt={0}>
      <FieldLabel $drop={6}>Size</FieldLabel>
      <SizeInput>20</SizeInput>
      <SizeHint>
        (Min: 1 GiB, Max: 16384 GiB)
        <Info />
      </SizeHint>
    </Field>
    <Field $h={83} $pt={0}>
      <FieldLabel $drop={1}>Iops</FieldLabel>
      <Iops>100 / 3000</Iops>
      <IopsHint>
        (Baseline of 3 IOPS per GiB with a<br />
        minimum of 100 IOPS, burstable to<br />
        3000 IOPS)
      </IopsHint>
      <svg width="17" height="60"><g transform="translate(0 20.500)"><Info /></g></svg>
    </Field>
    <ModalFoot>
      <Cancel>Cancel</Cancel>
      <ModifyButton>Modify</ModifyButton>
    </ModalFoot>
  </Modal>
);

const WindowsTaskbar = () => (
  <Taskbar>
    <TaskSlot $w={48}>
      <svg width="16" height="16" fill="#fff">
        <path d="M0 2.300 6.500 1.400V7.600H0zM7.300 1.300 16 0v7.600H7.300zM0 8.400h6.500v6.200L0 13.700zM7.300 8.400H16V16l-8.700-1.300z" />
      </svg>
    </TaskSlot>
    <TaskSlot $w={48}>
      <svg width="17" height="16" fill="none" stroke="#fff">
        <path d="M.5 0v2.500h11V0M.5 16v-2.500h11V16M.5 4.500h11v7H.5zM14.500 0v4M14.500 8v8" />
        <path d="M13 6h3" strokeWidth="2.500" />
      </svg>
    </TaskSlot>
    <TaskSlot $w={52}>
      <svg width="24" height="17" viewBox="0 0 24 17">
        <path d="M5 1h18l-3 15H2z" fill="#4a8cc4" stroke="#9ccdf0" />
        <path d="M8 4h12l-2 9H6z" fill="#d3eafb" />
        <path d="M10 6.500h7l-1 4H9z" fill="#2e6ba4" />
        <path d="M0 3.500h5M1 6.500h4M0 10h4" stroke="#7fb2dc" />
      </svg>
    </TaskSlot>
    <TaskSlot $w={48} $open>
      <svg width="22" height="19" viewBox="0 0 22 19">
        <path d="M0 1h8l2 2h12v15H0z" fill="#ffd768" />
        <path d="M0 5h22v13H0z" fill="#ffe28c" />
        <path d="M4 19v-6q0-2 2-2h10q2 0 2 2v6h-4v-4H8v4z" fill="#2ea3e0" />
      </svg>
    </TaskSlot>
    <TaskSlot $w={49}>
      <SteamDisc>
        <FaSteamSymbol size={20} color="#f2f5f8" />
      </SteamDisc>
    </TaskSlot>
    <TaskSlot $w={50}>
      <svg width="24" height="25" viewBox="0 0 24 25">
        <defs>
          <linearGradient id="nox" x1="0" y1="0" x2="1" y2="1">
            <stop offset="0" stopColor="#21b6c9" />
            <stop offset=".5" stopColor="#5a4fd6" />
            <stop offset="1" stopColor="#e7329a" />
          </linearGradient>
        </defs>
        <path d="M12 1 22.500 6.800v11.400L12 24 1.500 18.200V6.800z" fill="#0e1420" stroke="url(#nox)" strokeWidth="1.500" />
        <path d="M4.500 15.500v-3.500q0-1.500 1.500-1.500h2v5M10 10.500h4v5h-4zM15.500 10.500l4 5M19.500 10.500l-4 5" fill="none" stroke="#1fc4c0" strokeWidth="1.200" />
      </svg>
    </TaskSlot>
    <TaskSlot $w={48} $active>
      <svg width="22" height="22" viewBox="0 0 22 22">
        <circle cx="11" cy="11" r="11" fill="#ffcd42" />
        <path d="M1.500 5.500A11 11 0 0 0 10.500 22L15.300 13.500 11 15.500 6.700 13.500z" fill="#1da261" />
        <path d="M6.500 13.500 1.500 5.500A11 11 0 0 1 20.700 6H11z" fill="#de4b3c" />
        <circle cx="11" cy="11" r="5" fill="#f5f5f5" />
        <circle cx="11" cy="11" r="4" fill="#4a8af4" />
      </svg>
    </TaskSlot>
    <Tray>
      <svg width="64" height="18" fill="none" stroke="#fff" strokeWidth="1.200">
        <path d="M.500 11.500 6 6l5.500 5.500" />
        <path d="M27 3.500h10.500v8H24M31.500 12v3.500M27 15.500h8M22.500 2.500h4v4h-4zM24.500 6.500v9" />
        <path d="M46.500 7v4h2l3 3V4l-3 3zM54 7q1.500 2 0 4M56.500 5q3 4 0 8M59 3q4.500 6 0 12" />
      </svg>
      <MenuLabel $w={31}><svg width="1" height="1" />ENG</MenuLabel>
      <Clock>
        18:16
        <br />
        21.03.2021
      </Clock>
      <svg width="46" height="40" fill="none" stroke="#fff">
        <path d="M5.500 13.500h15v12h-5l-2.500 3-2.500-3h-5z" strokeWidth="1.200" />
        <path d="M41.500 0v40" stroke="#6a6d70" />
      </svg>
    </Tray>
  </Taskbar>
);

export default function App() {
  return (
    <Screen>
      <GlobalStyle />
      <Browser />
      <AwsHeader />
      <Body>
        <SideNav />
        <VerticalScrollbar thumb={621} />
        <Main>
          <ActionsBar>
            <Button $primary $w={119}>Create Volume</Button>
            <Button $w={90}>
              Actions
              <svg width="10" height="7" fill="none" stroke="#3a424b" strokeWidth="2">
                <path d="M1 1l4 4 4-4" />
              </svg>
            </Button>
            <ActionIcons>
              <Flask />
              <Sync />
              <Gear />
              <Help s={17} color="#3a424b" bg={c.page} />
            </ActionIcons>
          </ActionsBar>
          <FilterBar>
            <FilterInput>
              <Magnifier s={18} color="#5d646c" w={2.2} />
              <span>Filter by tags and attributes or search by keyword</span>
              <Help s={17} color="#5d646c" bg={c.page} />
            </FilterInput>
            <Pager>
              <Chevron bar />
              <Chevron />
              <b>1 to 3 of 3</b>
              <Chevron flip />
              <Chevron flip bar />
            </Pager>
          </FilterBar>
          <VolumeTable />
          <EmptyArea />
          <HScroll>
            <Tri dir="l" color="#747b83" />
            <HThumb />
            <Tri dir="r" color="#5a6169" />
          </HScroll>
          <Detail>
            <DetailMain>
              <DetailTitle>
                Volumes: <i /> vol-02b304a8045c49eea (CentOS)
                <PaneIcons>
                  <PaneIcon $top={10} />
                  <PaneIcon $top={8} />
                  <PaneIcon $top={5} />
                </PaneIcons>
              </DetailTitle>
              <Tabs>
                <DetailTab $active $w={103}>Description</DetailTab>
                <DetailTab $w={116}>Status Checks</DetailTab>
                <DetailTab $w={92}>Monitoring</DetailTab>
                <DetailTab $w={60}>Tags</DetailTab>
              </Tabs>
              <DetailColumns>
                <PropList items={leftProps} />
                <PropList items={rightProps} />
              </DetailColumns>
            </DetailMain>
            <VerticalScrollbar thumb={183} />
          </Detail>
        </Main>
      </Body>
      <Footer>
        <FooterLink $gap={25}>Feedback</FooterLink>
        <MenuLabel>English (US) <Caret /></MenuLabel>
        <Spacer />
        <Copyright>© 2008 - 2021, Amazon Web Services, Inc. or its affiliates. All rights reserved.</Copyright>
        <FooterLink $gap={25}>Privacy Policy</FooterLink>
        <FooterLink $gap={25}>Terms of Use</FooterLink>
        <FooterLink $gap={0}>Cookie preferences</FooterLink>
      </Footer>
      <WindowsTaskbar />
      <ModifyDialog />
    </Screen>
  );
}
